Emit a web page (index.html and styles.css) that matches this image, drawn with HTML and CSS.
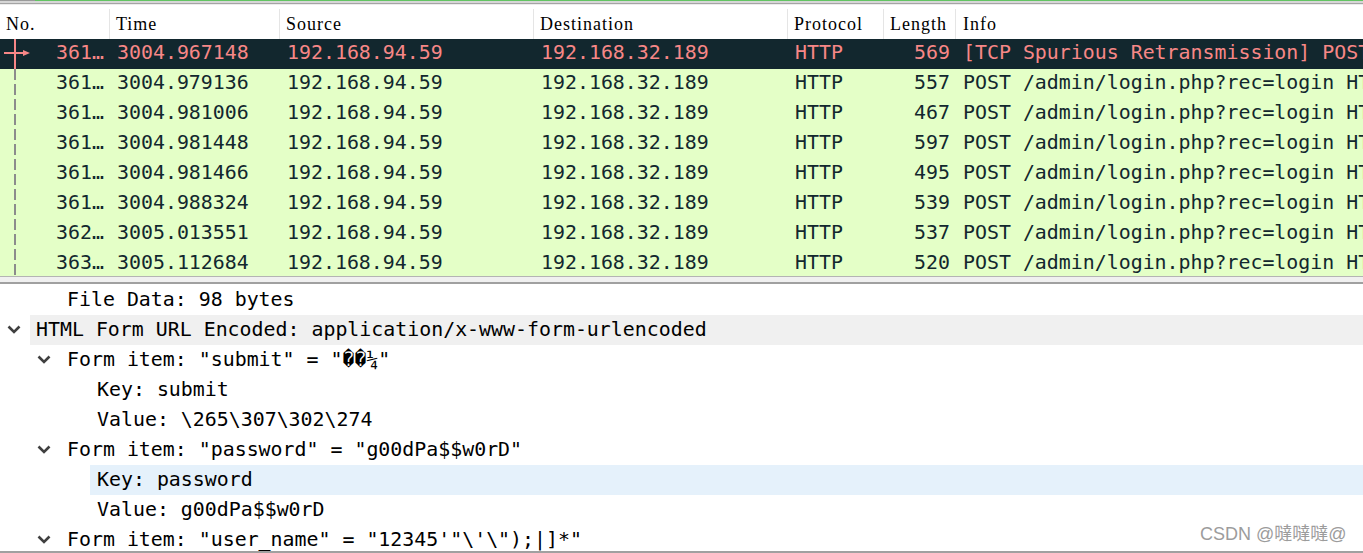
FILE: index.html
```html
<!DOCTYPE html>
<html lang="en">
<head>
<meta charset="utf-8">
<title>Wireshark capture</title>
<link rel="stylesheet" href="styles.css">
</head>
<body>
<div class="app">
  <div class="topbar">
    <div class="tb-accent"><span class="tb-left"></span><span class="tb-green"></span></div>
    <div class="tb-mid"></div>
    <div class="tb-dark"></div>
    <div class="tb-light"></div>
  </div>

  <section class="plist">
    <div class="phead cols">
      <div class="hc">No.</div>
      <div class="hc">Time</div>
      <div class="hc">Source</div>
      <div class="hc">Destination</div>
      <div class="hc">Protocol</div>
      <div class="hc">Length</div>
      <div class="hc last">Info</div>
    </div>

    <div class="prow cols bad">
      <div class="dc num"><svg class="mark" width="34" height="30" viewBox="0 0 34 30"><rect x="14" y="0" width="2" height="30" fill="#f78787"/><rect x="4" y="13" width="20" height="2" fill="#f78787"/><polygon points="23,11 30,14 23,17" fill="#f78787"/></svg>361…</div>
      <div class="dc">3004.967148</div>
      <div class="dc">192.168.94.59</div>
      <div class="dc">192.168.32.189</div>
      <div class="dc">HTTP</div>
      <div class="dc num">569</div>
      <div class="dc">[TCP Spurious Retransmission] POST /admin/login.php?rec=login HTTP/1.1  (application/x-www-form-urlencoded)</div>
    </div>

    <div class="prow cols http">
      <div class="dc num rel">361…</div>
      <div class="dc">3004.979136</div>
      <div class="dc">192.168.94.59</div>
      <div class="dc">192.168.32.189</div>
      <div class="dc">HTTP</div>
      <div class="dc num">557</div>
      <div class="dc">POST /admin/login.php?rec=login HTTP/1.1  (application/x-www-form-urlencoded)</div>
    </div>
    <div class="prow cols http">
      <div class="dc num rel">361…</div>
      <div class="dc">3004.981006</div>
      <div class="dc">192.168.94.59</div>
      <div class="dc">192.168.32.189</div>
      <div class="dc">HTTP</div>
      <div class="dc num">467</div>
      <div class="dc">POST /admin/login.php?rec=login HTTP/1.1  (application/x-www-form-urlencoded)</div>
    </div>
    <div class="prow cols http">
      <div class="dc num rel">361…</div>
      <div class="dc">3004.981448</div>
      <div class="dc">192.168.94.59</div>
      <div class="dc">192.168.32.189</div>
      <div class="dc">HTTP</div>
      <div class="dc num">597</div>
      <div class="dc">POST /admin/login.php?rec=login HTTP/1.1  (application/x-www-form-urlencoded)</div>
    </div>
    <div class="prow cols http">
      <div class="dc num rel">361…</div>
      <div class="dc">3004.981466</div>
      <div class="dc">192.168.94.59</div>
      <div class="dc">192.168.32.189</div>
      <div class="dc">HTTP</div>
      <div class="dc num">495</div>
      <div class="dc">POST /admin/login.php?rec=login HTTP/1.1  (application/x-www-form-urlencoded)</div>
    </div>
    <div class="prow cols http">
      <div class="dc num rel">361…</div>
      <div class="dc">3004.988324</div>
      <div class="dc">192.168.94.59</div>
      <div class="dc">192.168.32.189</div>
      <div class="dc">HTTP</div>
      <div class="dc num">539</div>
      <div class="dc">POST /admin/login.php?rec=login HTTP/1.1  (application/x-www-form-urlencoded)</div>
    </div>
    <div class="prow cols http">
      <div class="dc num rel">362…</div>
      <div class="dc">3005.013551</div>
      <div class="dc">192.168.94.59</div>
      <div class="dc">192.168.32.189</div>
      <div class="dc">HTTP</div>
      <div class="dc num">537</div>
      <div class="dc">POST /admin/login.php?rec=login HTTP/1.1  (application/x-www-form-urlencoded)</div>
    </div>
    <div class="prow cols http">
      <div class="dc num rel">363…</div>
      <div class="dc">3005.112684</div>
      <div class="dc">192.168.94.59</div>
      <div class="dc">192.168.32.189</div>
      <div class="dc">HTTP</div>
      <div class="dc num">520</div>
      <div class="dc">POST /admin/login.php?rec=login HTTP/1.1  (application/x-www-form-urlencoded)</div>
    </div>
  </section>

  <div class="splitter"></div>

  <section class="details">
    <div class="trow lvl1"><span class="tog"></span><span class="tx">File Data: 98 bytes</span></div>
    <div class="trow lvl0"><span class="tog"><svg width="14" height="9" viewBox="0 0 14 9"><polyline points="1.5,1.5 7,7 12.5,1.5" fill="none" stroke="#404040" stroke-width="2.6"/></svg></span><span class="tx shade">HTML Form URL Encoded: application/x-www-form-urlencoded</span></div>
    <div class="trow lvl1"><span class="tog"><svg width="14" height="9" viewBox="0 0 14 9"><polyline points="1.5,1.5 7,7 12.5,1.5" fill="none" stroke="#404040" stroke-width="2.6"/></svg></span><span class="tx">Form item: "submit" = "��¼"</span></div>
    <div class="trow lvl2"><span class="tog"></span><span class="tx">Key: submit</span></div>
    <div class="trow lvl2"><span class="tog"></span><span class="tx">Value: \265\307\302\274</span></div>
    <div class="trow lvl1"><span class="tog"><svg width="14" height="9" viewBox="0 0 14 9"><polyline points="1.5,1.5 7,7 12.5,1.5" fill="none" stroke="#404040" stroke-width="2.6"/></svg></span><span class="tx">Form item: "password" = "g00dPa$$w0rD"</span></div>
    <div class="trow lvl2"><span class="tog"></span><span class="tx sel">Key: password</span></div>
    <div class="trow lvl2"><span class="tog"></span><span class="tx">Value: g00dPa$$w0rD</span></div>
    <div class="trow lvl1"><span class="tog"><svg width="14" height="9" viewBox="0 0 14 9"><polyline points="1.5,1.5 7,7 12.5,1.5" fill="none" stroke="#404040" stroke-width="2.6"/></svg></span><span class="tx">Form item: "user_name" = "12345'"\'\");|]*"</span></div>
  </section>

  <div class="bottomline"></div>

  <div class="watermark">CSDN @噠噠噠@</div>
</div>
</body>
</html>
```

FILE: styles.css
```css
* { box-sizing: border-box; }

html, body {
  margin: 0;
  padding: 0;
  background: #ffffff;
}

.app {
  position: relative;
  width: 1363px;
  height: 553px;
  overflow: hidden;
  display: flex;
  flex-direction: column;
}

/* top edge */
.topbar { flex: 0 0 5px; display: flex; flex-direction: column; }
.tb-accent { height: 1px; display: flex; }
.tb-left { width: 35px; background: #9a9a9a; }
.tb-green { flex: 1; background: #62c462; }
.tb-mid { height: 2px; background: #d6d6d6; }
.tb-dark { height: 1px; background: #a4a4a4; }
.tb-light { height: 1px; background: #ececec; }

/* packet list */
.plist {
  flex: 0 0 271px;
  overflow: hidden;
  display: flex;
  flex-direction: column;
}

.cols {
  display: grid;
  grid-template-columns: 110px 170px 254px 254px 96px 72px 1fr;
}

.phead {
  flex: 0 0 34px;
  padding-top: 4px;
  background: #ffffff;
}

.hc {
  height: 30px;
  line-height: 30px;
  padding-left: 6px;
  border-right: 1px solid #e5e5e5;
  font-family: "Liberation Serif", serif;
  font-size: 18px;
  letter-spacing: 1px;
  color: #000000;
  white-space: nowrap;
  overflow: hidden;
}
.hc.last { border-right: none; padding-left: 7px; }

.prow {
  flex: 0 0 30px;
  height: 30px;
  font-family: "DejaVu Sans Mono", monospace;
  font-size: 19.9px;
}
.prow.bad { background: #12272e; color: #f78787; }
.prow.http { background: #e4ffc7; color: #12272e; }

.dc {
  position: relative;
  height: 30px;
  line-height: 27px;
  padding: 0 0 3px 7px;
  white-space: pre;
  overflow: hidden;
}
.dc.num { text-align: right; padding-right: 6px; padding-left: 0; }

.mark {
  position: absolute;
  left: 0;
  top: 0;
}

.dc.rel::before {
  content: "";
  position: absolute;
  left: 14px;
  top: 0;
  width: 2px;
  height: 30px;
  background: repeating-linear-gradient(to bottom, #8c8c8c 0 11px, transparent 11px 15px);
}

/* splitter */
.splitter {
  flex: 0 0 8px;
  border-top: 1px solid #b4b4b4;
  border-bottom: 2px solid #a0a0a0;
  background: #f0f0f0;
}

/* details tree */
.details {
  flex: 0 0 267px;
  padding-top: 1px;
  overflow: hidden;
  font-family: "DejaVu Sans Mono", monospace;
  font-size: 19.9px;
  color: #000000;
}

.trow {
  display: flex;
  height: 30px;
  line-height: 30px;
  white-space: pre;
}
.trow.lvl0 { padding-left: 0; }
.trow.lvl1 { padding-left: 30px; }
.trow.lvl2 { padding-left: 60px; }

.tog {
  flex: 0 0 30px;
  display: flex;
  align-items: center;
  justify-content: center;
  padding-right: 2px;
}
.tog svg { display: block; margin-top: -1px; }

.tx {
  flex: 1;
  padding-left: 7px;
  overflow: hidden;
}
.tx.shade { background: #f0f0f0; padding-left: 6px; }
.tx.sel { background: #e5f1fb; }

.bottomline {
  flex: 0 0 2px;
  background: #a0a0a0;
}

/* watermark overlay */
.watermark {
  position: absolute;
  left: 1200px;
  top: 522px;
  font-family: "Liberation Sans", "Noto Sans CJK SC", sans-serif;
  font-size: 18px;
  line-height: 24px;
  color: #9c9c9c;
  text-shadow: 0 0 1px #ffffff;
  white-space: nowrap;
}
```
